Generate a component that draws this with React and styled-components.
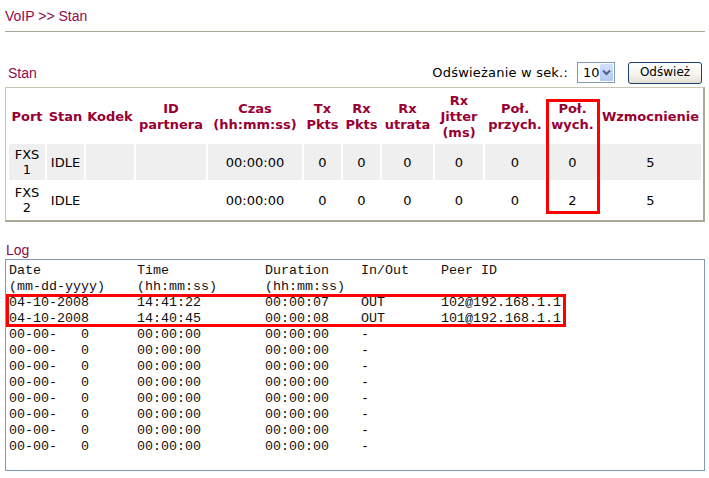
import React from "react";
import styled, { createGlobalStyle } from "styled-components";

const Global = createGlobalStyle`
  html, body { margin: 0; padding: 0; background: #fff; }
  body { font-family: "DejaVu Sans", Verdana, sans-serif; color: #000; }
`;

const Page = styled.div`
  width: 700px;
  padding: 0 4px 0 5px;
`;

const Title = styled.div`
  font-family: "Liberation Sans", Arial, sans-serif;
  font-size: 14px;
  line-height: 20px;
  color: #8f0a4e;
  padding: 6px 0 5px 0;
  border-bottom: 1px solid #aca899;
`;

const ControlsRow = styled.div`
  display: flex;
  align-items: center;
  justify-content: space-between;
  margin-top: 29px;
  height: 23px;
  margin-bottom: 3px;
`;

const SectionLabel = styled.div`
  font-family: "Liberation Sans", Arial, sans-serif;
  font-size: 14px;
  line-height: 16px;
  color: #8f0a4e;
  padding-left: ${(p) => p.$indent}px;
`;

const Refresh = styled.div`
  display: flex;
  align-items: center;
  margin-right: 3px;
`;

const RefreshText = styled.span`
  font-size: 13px;
  letter-spacing: 0.2px;
  color: #000;
  margin-right: 9px;
`;

const SelectBox = styled.div`
  display: flex;
  align-items: stretch;
  box-sizing: border-box;
  width: 38px;
  height: 21px;
  border: 1px solid #7f9db9;
  background: #fff;
  padding: 1px;
  margin-right: 13px;
`;

const SelectValue = styled.span`
  flex: 1;
  font-size: 13px;
  line-height: 17px;
  padding-left: 4px;
`;

const ArrowBox = styled.span`
  width: 15px;
  display: flex;
  align-items: center;
  justify-content: center;
  background: linear-gradient(#d3e0fd, #b4c8f6);
  border-radius: 1px;
`;

const Button = styled.button`
  box-sizing: border-box;
  width: 74px;
  height: 22px;
  border: 1px solid #1c3f74;
  border-radius: 3px;
  background: linear-gradient(#ffffff, #f4f3ee 60%, #e3e0d3);
  font-family: "DejaVu Sans", Verdana, sans-serif;
  font-size: 12px;
  color: #000;
  padding: 0 0 2px 0;
`;

const TableFrame = styled.div`
  position: relative;
`;

const Table = styled.table`
  box-sizing: border-box;
  width: 700px;
  table-layout: fixed;
  border-collapse: separate;
  border-spacing: 2px;
  padding: 1px 0 0 1px;
  border-left: 1px solid #c9c5b3;
  border-top: 1px solid #c9c5b3;
  border-right: 2px solid #aca899;
  border-bottom: 2px solid #aca899;
`;

const Th = styled.th`
  height: 51px;
  padding: 0;
  font-size: 13px;
  font-weight: bold;
  line-height: 16px;
  color: #990033;
  text-align: center;
  vertical-align: middle;
`;

const Td = styled.td`
  height: 36px;
  padding: 0;
  font-size: 13px;
  line-height: 15px;
  text-align: center;
  vertical-align: middle;
  background: ${(p) => (p.$shade ? "#efefef" : "#fff")};
`;

const ColumnMark = styled.div`
  position: absolute;
  left: 541px;
  top: 12px;
  width: 54px;
  height: 115px;
  box-sizing: border-box;
  border: 3px solid #ff0000;
  pointer-events: none;
`;

const LogLabel = styled(SectionLabel)`
  margin-top: 20px;
  margin-bottom: 1px;
`;

const LogBox = styled.div`
  box-sizing: border-box;
  height: 212px;
  border: 1px solid #7f9db9;
  padding: 3px 3px 2px 3px;
  font-family: "Liberation Mono", "Courier New", monospace;
  font-size: 13.333px;
  line-height: 16px;
  color: #111;
  white-space: pre;
  overflow: hidden;
`;

const LogLine = styled.div`
  height: 16px;
`;

const LogMark = styled.div`
  position: relative;
  width: fit-content;
  padding-right: 2px;
  &::after {
    content: "";
    position: absolute;
    top: -1px;
    bottom: 0;
    left: -3px;
    right: -3px;
    border: 3px solid #ff0000;
    pointer-events: none;
  }
`;

const widths = [36, 37, 48, 70, 94, 37, 37, 51, 48, 60, 51, 101];
const headers = [
  ["Port"],
  ["Stan"],
  ["Kodek"],
  ["ID", "partnera"],
  ["Czas", "(hh:mm:ss)"],
  ["Tx", "Pkts"],
  ["Rx", "Pkts"],
  ["Rx", "utrata"],
  ["Rx", "Jitter", "(ms)"],
  ["Poł.", "przych."],
  ["Poł.", "wych."],
  ["Wzmocnienie"],
];
const rows = [
  [["FXS", "1"], "IDLE", "", "", "00:00:00", "0", "0", "0", "0", "0", "0", "5"],
  [["FXS", "2"], "IDLE", "", "", "00:00:00", "0", "0", "0", "0", "0", "2", "5"],
];

const pad = (s, n) => s + " ".repeat(Math.max(0, n - s.length));
const logLine = (a, b, c, d, e) =>
  pad(a, 16) + pad(b, 16) + pad(c, 12) + pad(d, 10) + e;

const logHead = [
  logLine("Date", "Time", "Duration", "In/Out", "Peer ID"),
  logLine("(mm-dd-yyyy)", "(hh:mm:ss)", "(hh:mm:ss)", "", "").trimEnd(),
];
const logMarked = [
  logLine("04-10-2008", "14:41:22", "00:00:07", "OUT", "102@192.168.1.1"),
  logLine("04-10-2008", "14:40:45", "00:00:08", "OUT", "101@192.168.1.1"),
];
const logEmpty = Array.from({ length: 8 }, () =>
  logLine("00-00-   0", "00:00:00", "00:00:00", "-", "").trimEnd()
);

const Lines = ({ items }) =>
  items.map((t, i) => <LogLine key={i}>{t}</LogLine>);

export default function App() {
  return (
    <>
      <Global />
      <Page>
        <Title>VoIP &gt;&gt; Stan</Title>
        <ControlsRow>
          <SectionLabel $indent={3}>Stan</SectionLabel>
          <Refresh>
            <RefreshText>Odświeżanie w sek.:</RefreshText>
            <SelectBox>
              <SelectValue>10</SelectValue>
              <ArrowBox>
                <svg width="9" height="7" viewBox="0 0 9 7">
                  <path d="M1 1.5 L4.5 5 L8 1.5" fill="none" stroke="#4d6185" strokeWidth="2" />
                </svg>
              </ArrowBox>
            </SelectBox>
            <Button>Odśwież</Button>
          </Refresh>
        </ControlsRow>
        <TableFrame>
          <Table>
            <colgroup>
              {widths.map((w, i) => (
                <col key={i} style={{ width: w }} />
              ))}
            </colgroup>
            <thead>
              <tr>
                {headers.map((h, i) => (
                  <Th key={i}>
                    {h.map((l, j) => (
                      <React.Fragment key={j}>
                        {j > 0 && <br />}
                        {l}
                      </React.Fragment>
                    ))}
                  </Th>
                ))}
              </tr>
            </thead>
            <tbody>
              {rows.map((r, ri) => (
                <tr key={ri}>
                  {r.map((c, ci) => (
                    <Td key={ci} $shade={ri === 0}>
                      {Array.isArray(c) ? (
                        <>
                          {c[0]}
                          <br />
                          {c[1]}
                        </>
                      ) : (
                        c
                      )}
                    </Td>
                  ))}
                </tr>
              ))}
            </tbody>
          </Table>
          <ColumnMark />
        </TableFrame>
        <LogLabel $indent={1}>Log</LogLabel>
        <LogBox>
          <Lines items={logHead} />
          <LogMark>
            <Lines items={logMarked} />
          </LogMark>
          <Lines items={logEmpty} />
        </LogBox>
      </Page>
    </>
  );
}
